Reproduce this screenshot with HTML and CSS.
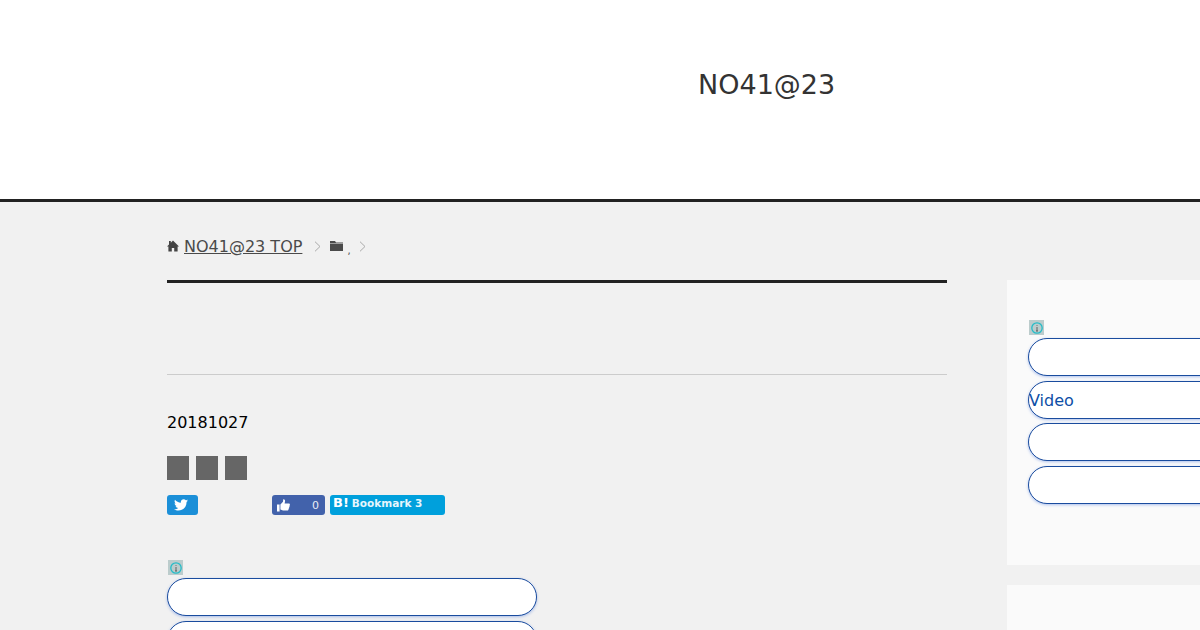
FILE: index.html
```html
<!DOCTYPE html>
<html lang="en">
<head>
    <meta charset="UTF-8">
    <title>NO41@23</title>
    <link rel="stylesheet" href="styles.css">
</head>
<body>
    <header class="site-header">
        <div class="site-title">NO41@23</div>
    </header>
    <div class="wrap">
        <main class="content">
            <nav class="crumbs">
                <svg class="home-icon" width="12" height="12" viewBox="0 0 12 12"><path d="M6 0.5 L12 6.4 L10.6 6.4 L10.6 11.5 L7.2 11.5 L7.2 8 L4.8 8 L4.8 11.5 L1.4 11.5 L1.4 6.4 L0 6.4 L2 4.4 L2 1 L3.8 1 L3.8 2.7 Z" fill="#444"/></svg>
                <a class="crumb-link" href="#">NO41@23 TOP</a>
                <svg class="chevron first" width="7" height="11" viewBox="0 0 7 11"><path d="M1 0.7 L6 5.5 L1 10.3" fill="none" stroke="#aaa"/></svg>
                <svg class="folder-icon" width="13" height="10" viewBox="0 0 13 10"><path d="M0 0 H5 L6 1.5 H13 V2.6 H0 Z M0 3 H13 V10 H0 Z" fill="#4a4a4a"/></svg>
                <span class="crumb-dot">,</span>
                <svg class="chevron" width="7" height="11" viewBox="0 0 7 11"><path d="M1 0.7 L6 5.5 L1 10.3" fill="none" stroke="#aaa"/></svg>
            </nav>
            <div class="title-rule"></div>
            <div class="thin-rule"></div>
            <div class="post-date">20181027</div>
            <div class="squares">
                <span class="square"></span>
                <span class="square"></span>
                <span class="square"></span>
            </div>
            <div class="share">
                <a class="share-btn tw" href="#">
                    <svg width="14" height="12" viewBox="0 0 24 20"><path d="M24 2.4c-.9.4-1.8.7-2.8.8 1-.6 1.8-1.6 2.2-2.7-1 .6-2 1-3.1 1.2C19.3.7 18 0 16.6 0c-2.7 0-4.9 2.2-4.9 4.9 0 .4 0 .8.1 1.1C7.7 5.8 4.1 3.9 1.7.9c-.4.7-.7 1.6-.7 2.5 0 1.7.9 3.2 2.2 4.1-.8 0-1.6-.2-2.2-.6v.1c0 2.4 1.7 4.4 3.9 4.8-.4.1-.8.2-1.3.2-.3 0-.6 0-.9-.1.6 2 2.4 3.4 4.6 3.4-1.7 1.3-3.8 2.1-6.1 2.1-.4 0-.8 0-1.2-.1 2.2 1.4 4.8 2.2 7.5 2.2 9.1 0 14-7.5 14-14v-.6c1-.7 1.8-1.6 2.5-2.5z" fill="#fff"/></svg>
                </a>
                <a class="share-btn fb" href="#">
                    <svg width="13" height="13" viewBox="0 0 13 13"><path d="M0 5.5 H2.6 V12.5 H0 Z M3.4 5.6 L6 2.8 L6.2 0.3 C7.6 0.1 8.3 1.2 8 2.6 L7.6 4.6 H12 C13 4.6 13.2 5.8 12.5 6.3 C13 6.9 12.8 7.8 12.1 8.1 C12.4 8.8 12.1 9.5 11.5 9.8 C11.7 10.7 11.2 11.5 10.2 11.5 H6 L3.4 10.6 Z" fill="#fff"/></svg>
                    <span class="fb-count">0</span>
                </a>
                <a class="share-btn hb" href="#"><b class="hb-mark">B!</b><span class="hb-label">Bookmark 3</span></a>
            </div>
            <span class="info-badge">
                <svg width="12" height="12" viewBox="0 0 12 12"><circle cx="6" cy="6" r="5.2" fill="none" stroke="#25bcc8" stroke-width="1.3"/><path d="M6 3 V3.8 M6 5 V9 M5 9 H7" stroke="#555" stroke-width="0.9" fill="none"/></svg>
            </span>
            <a class="pill" href="#"></a>
            <a class="pill" href="#"></a>
        </main>
        <aside class="sidebar">
            <section class="widget">
                <span class="info-badge side">
                    <svg width="12" height="12" viewBox="0 0 12 12"><circle cx="6" cy="6" r="5.2" fill="none" stroke="#25bcc8" stroke-width="1.3"/><path d="M6 3 V3.8 M6 5 V9 M5 9 H7" stroke="#555" stroke-width="0.9" fill="none"/></svg>
                </span>
                <a class="pill" href="#"></a>
                <a class="pill" href="#">Video</a>
                <a class="pill" href="#"></a>
                <a class="pill" href="#"></a>
            </section>
            <section class="widget empty"></section>
        </aside>
    </div>
</body>
</html>
```

FILE: styles.css
```css
html, body {
    height: 630px;
    overflow: hidden;
}
body {
    margin: 0;
    background: #f1f1f1;
    font-family: 'DejaVu Sans', sans-serif;
    color: #000;
}
.site-header {
    height: 199px;
    background: #fff;
    border-bottom: 3px solid #222;
}
.site-title {
    padding: 67px 0 0 698px;
    font-size: 27px;
    line-height: 36px;
    color: #333;
}
.wrap {
    display: flex;
    gap: 60px;
    padding-left: 167px;
    width: 1300px;
}
.content {
    width: 780px;
    flex-shrink: 0;
}
.crumbs {
    display: flex;
    align-items: center;
    height: 20px;
    margin-top: 34px;
    font-size: 16px;
    color: #4a4a4a;
}
.crumb-link {
    margin-left: 5px;
    color: #4a4a4a;
}
.chevron {
    margin-left: 2px;
}
.chevron.first {
    margin-left: 12px;
}
.folder-icon {
    margin-left: 9px;
}
.crumb-dot {
    margin-left: 4px;
    font-size: 10px;
    margin-top: 8px;
    margin-right: 6px;
}
.title-rule {
    height: 3px;
    margin-top: 24px;
    background: #222;
}
.thin-rule {
    height: 1px;
    margin-top: 91px;
    background: #ccc;
}
.post-date {
    margin-top: 38px;
    font-size: 16px;
    line-height: 20px;
}
.squares {
    display: flex;
    gap: 7px;
    margin-top: 23px;
}
.square {
    width: 22px;
    height: 24px;
    background: #666;
}
.share {
    display: flex;
    margin-top: 15px;
    height: 20px;
}
.share-btn {
    display: flex;
    align-items: center;
    height: 20px;
    border-radius: 3px;
    color: #fff;
    text-decoration: none;
    box-sizing: border-box;
}
.tw {
    width: 31px;
    padding-left: 7px;
    background: #1b8fd8;
}
.fb {
    width: 53px;
    margin-left: 74px;
    padding-left: 5px;
    background: #4262ab;
}
.fb-count {
    margin-left: auto;
    padding-right: 6px;
    font-size: 11px;
    color: #e8ecf5;
}
.hb {
    width: 115px;
    margin-left: 5px;
    padding: 0 0 5px 3px;
    background: #00a0dc;
    font-weight: bold;
}
.hb-mark {
    font-size: 13px;
}
.hb-label {
    margin-left: 3px;
    font-size: 10.5px;
    color: #e6f6fc;
}
.info-badge {
    display: flex;
    align-items: center;
    justify-content: center;
    width: 15px;
    height: 15px;
    margin: 45px 0 3px 1px;
    background: #bccccc;
}
.info-badge.side {
    margin: 0 0 3px 1px;
}
.pill {
    display: block;
    box-sizing: border-box;
    width: 370px;
    height: 38px;
    margin-bottom: 4.5px;
    border: 1px solid #1a4c9e;
    border-bottom-width: 1.5px;
    border-radius: 19px;
    background: #fff;
    box-shadow: 0 1px 3px rgba(60, 110, 220, 0.4);
    font-size: 16px;
    line-height: 38px;
    color: #0d4ea6;
    text-decoration: none;
}
.sidebar {
    width: 300px;
    flex-shrink: 0;
    margin-top: 78px;
}
.widget {
    box-sizing: border-box;
    height: 285px;
    margin-bottom: 20px;
    padding: 40px 0 0 21px;
    background: #fafafa;
}
.widget.empty {
    height: 100px;
}
```
